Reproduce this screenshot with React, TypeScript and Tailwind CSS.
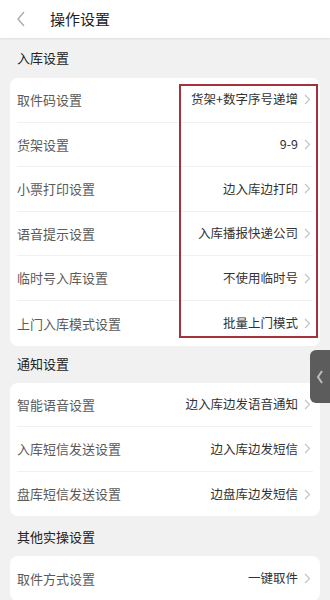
import React from "react";

type Row = { label: string; value: string };

const sec1: Row[] = [
  { label: "取件码设置", value: "货架+数字序号递增" },
  { label: "货架设置", value: "9-9" },
  { label: "小票打印设置", value: "边入库边打印" },
  { label: "语音提示设置", value: "入库播报快递公司" },
  { label: "临时号入库设置", value: "不使用临时号" },
  { label: "上门入库模式设置", value: "批量上门模式" },
];
const sec2: Row[] = [
  { label: "智能语音设置", value: "边入库边发语音通知" },
  { label: "入库短信发送设置", value: "边入库边发短信" },
  { label: "盘库短信发送设置", value: "边盘库边发短信" },
];
const sec3: Row[] = [{ label: "取件方式设置", value: "一键取件" }];

function Chevron() {
  return (
    <svg width="7" height="11" viewBox="0 0 7 11" className="ml-[6px] mr-[2px] shrink-0">
      <polyline points="1,1 5.5,5.5 1,10" fill="none" stroke="#c4c4c4" strokeWidth="1.2" />
    </svg>
  );
}

function Card({ rows }: { rows: Row[] }) {
  return (
    <div className="mx-[10px] rounded-[8px] bg-white">
      {rows.map((r, i) => (
        <div key={r.label} className="px-[7px]">
          <div
            className={
              "flex h-[44.6px] items-center justify-between " +
              (i < rows.length - 1 ? "border-b border-[#f1f1f1]" : "")
            }
          >
            <span className="text-[13px] text-[#5a5a5a]">{r.label}</span>
            <span className="flex items-center">
              <span className="text-[12.5px] text-[#333]">{r.value}</span>
              <Chevron />
            </span>
          </div>
        </div>
      ))}
    </div>
  );
}

export default function App() {
  return (
    <div
      className="relative h-[600px] w-[330px] overflow-hidden bg-[#f1f1f1]"
      style={{ fontFamily: '"Noto Sans CJK SC", "Noto Sans", sans-serif' }}
    >
      <div className="flex h-[38px] items-center bg-white shadow-[0_1px_2px_rgba(0,0,0,0.08)]">
        <svg width="10" height="16" viewBox="0 0 10 16" className="ml-[16px]">
          <polyline points="8,1 2,8 8,15" fill="none" stroke="#a8a8a8" strokeWidth="1.3" />
        </svg>
        <span className="ml-[24px] text-[15px] text-[#222]">操作设置</span>
      </div>
      <div className="flex h-[40px] items-center px-[17px] text-[13px] text-[#222]">入库设置</div>
      <Card rows={sec1} />
      <div className="flex h-[37px] items-center px-[17px] text-[13px] text-[#222]">通知设置</div>
      <Card rows={sec2} />
      <div className="flex h-[40px] items-center px-[17px] text-[13px] text-[#222]">其他实操设置</div>
      <Card rows={sec3} />

      <div className="pointer-events-none absolute left-[179px] top-[84px] h-[254px] w-[139px] border-2 border-[#a5323b]" />

      <div className="absolute left-[310px] top-[350px] flex h-[53px] w-[20px] items-center justify-center rounded-l-[6px] bg-[#5c5c5c]">
        <svg width="8" height="14" viewBox="0 0 8 14">
          <polyline points="6,1 2,7 6,13" fill="none" stroke="#bdbdbd" strokeWidth="2" />
        </svg>
      </div>
    </div>
  );
}
